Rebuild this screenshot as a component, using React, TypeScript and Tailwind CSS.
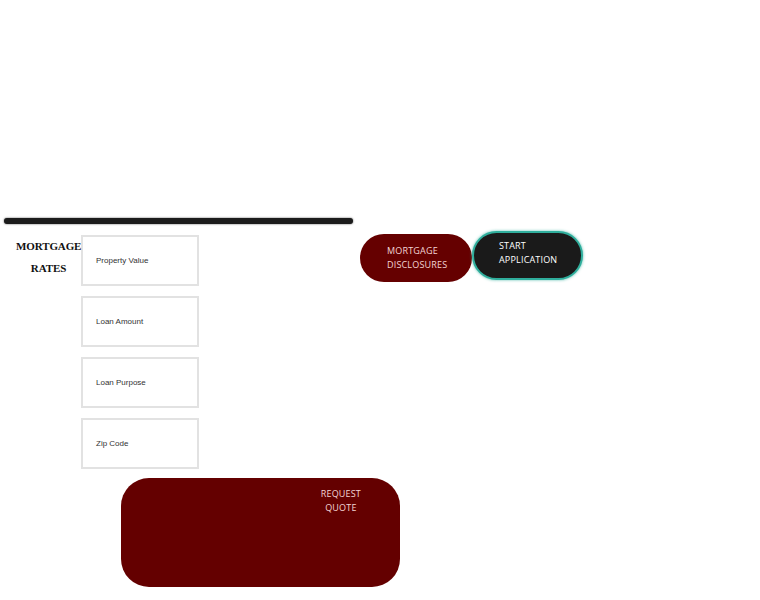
import React from "react";

const fields = ["Property Value", "Loan Amount", "Loan Purpose", "Zip Code"];

const btnText = "text-[9px] leading-[14px] tracking-[0.02em] uppercase [font-family:'Open_Sans',sans-serif]";

const App = () => {
  return (
    <div className="w-[760px] h-[600px] bg-white overflow-hidden">
      <div className="h-[218px]" />
      <div className="ml-[4px] w-[349px] h-[6px] rounded-full bg-[#1c1c1c] shadow-[0_0_2px_rgba(0,0,0,0.7)]" />

      <div className="flex items-start">
        <div className="relative z-10 ml-[16px] mt-[11px] w-[65px] text-center text-[11px] leading-[22px] font-bold tracking-[-0.01em] text-[#111] [font-family:'Liberation_Serif',serif] whitespace-nowrap">
          MORTGAGE
          <br />
          RATES
        </div>

        <div className="mt-[11px] flex flex-col gap-[10px]">
          {fields.map((f) => (
            <div
              key={f}
              className="w-[118px] h-[51px] border-2 border-[#e2e2e2] bg-white flex items-center pl-[13px] text-[8px] text-[#333] [font-family:'Liberation_Sans',sans-serif]"
            >
              {f}
            </div>
          ))}
        </div>

        <div className="ml-[161px] mt-[10px] w-[112px] h-[48px] rounded-full bg-[#650000] flex items-center pl-[27px] text-[#f3d4d4]">
          <div className={btnText}>
            Mortgage
            <br />
            Disclosures
          </div>
        </div>

        <div className="mt-[7px] w-[111px] h-[49px] rounded-full bg-[#1a1a1a] border-2 border-[#2fae9c] shadow-[0_0_3px_rgba(47,174,156,0.8)] pl-[25px] pt-[6px] text-white">
          <div className={btnText}>
            Start
            <br />
            Application
          </div>
        </div>
      </div>

      <div className="ml-[121px] mt-[9px] w-[279px] h-[109px] rounded-[28px] bg-[#640000] flex justify-end pr-[39px] pt-[9px] text-[#f3d4d4]">
        <div className={`${btnText} text-center`}>
          Request
          <br />
          Quote
        </div>
      </div>
    </div>
  );
};

export default App;
